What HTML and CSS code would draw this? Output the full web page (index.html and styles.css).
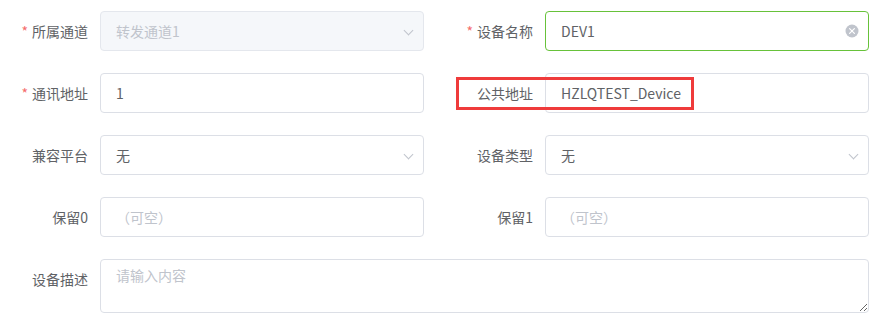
FILE: index.html
```html
<!DOCTYPE html>
<html lang="zh-CN">
<head>
    <meta charset="UTF-8">
    <meta name="viewport" content="width=device-width, initial-scale=1.0">
    <title>设备编辑</title>
    <link rel="stylesheet" href="styles.css">
</head>
<body>
    <form class="device-form">
        <div class="form-item">
            <label class="form-label required">所属通道</label>
            <div class="form-control select disabled">
                <input type="text" value="转发通道1" disabled>
                <span class="arrow"></span>
            </div>
        </div>
        <div class="form-item">
            <label class="form-label required">设备名称</label>
            <div class="form-control focused">
                <input type="text" value="DEV1">
                <span class="clear-icon">
                    <svg viewBox="0 0 14 14" width="14" height="14">
                        <circle cx="7" cy="7" r="6.5" fill="#c0c4cc"/>
                        <path d="M4.6 4.6 L9.4 9.4 M9.4 4.6 L4.6 9.4" stroke="#fff" stroke-width="1.2" stroke-linecap="round"/>
                    </svg>
                </span>
            </div>
        </div>

        <div class="form-item">
            <label class="form-label required">通讯地址</label>
            <div class="form-control">
                <input type="text" value="1">
            </div>
        </div>
        <div class="form-item">
            <label class="form-label">公共地址</label>
            <div class="form-control">
                <input type="text" value="HZLQTEST_Device">
            </div>
            <!-- annotation box from the screenshot -->
            <span class="highlight-box"></span>
        </div>

        <div class="form-item">
            <label class="form-label">兼容平台</label>
            <div class="form-control select">
                <input type="text" value="无" readonly>
                <span class="arrow"></span>
            </div>
        </div>
        <div class="form-item">
            <label class="form-label">设备类型</label>
            <div class="form-control select">
                <input type="text" value="无" readonly>
                <span class="arrow"></span>
            </div>
        </div>

        <div class="form-item">
            <label class="form-label">保留0</label>
            <div class="form-control">
                <input type="text" placeholder="（可空）">
            </div>
        </div>
        <div class="form-item">
            <label class="form-label">保留1</label>
            <div class="form-control">
                <input type="text" placeholder="（可空）">
            </div>
        </div>

        <div class="form-item full">
            <label class="form-label">设备描述</label>
            <div class="form-control">
                <textarea rows="2" placeholder="请输入内容"></textarea>
            </div>
        </div>
    </form>
</body>
</html>
```

FILE: styles.css
```css
* {
    margin: 0;
    padding: 0;
    box-sizing: border-box;
}

body {
    font-family: "Noto Sans CJK SC", "Noto Sans", sans-serif;
    font-size: 14px;
    color: #606266;
    background: #fff;
}

.device-form {
    display: grid;
    grid-template-columns: 424px 424px;
    column-gap: 21px;
    row-gap: 22px;
    padding-top: 11px;
}

.form-item {
    position: relative;
    display: flex;
    align-items: flex-start;
}

.form-item.full {
    grid-column: 1 / 3;
}

.form-label {
    width: 100px;
    flex-shrink: 0;
    padding-right: 12px;
    text-align: right;
    line-height: 40px;
    color: #606266;
}

.form-label.required::before {
    content: "*";
    color: #f56c6c;
    margin-right: 4px;
}

.form-control {
    position: relative;
    flex: 1;
}

.form-control input,
.form-control textarea {
    display: block;
    width: 100%;
    height: 40px;
    padding: 0 15px;
    border: 1px solid #dcdfe6;
    border-radius: 4px;
    background: #fff;
    color: #606266;
    font-family: inherit;
    font-size: 14px;
    outline: none;
}

.form-control textarea {
    height: 54px;
    padding: 5px 15px;
    line-height: 1.5;
    resize: vertical;
}

.form-control input::placeholder,
.form-control textarea::placeholder {
    color: #c0c4cc;
}

.form-control.select input {
    padding-right: 30px;
    cursor: pointer;
}

.form-control.disabled input {
    background: #f5f7fa;
    border-color: #e4e7ed;
    color: #c0c4cc;
}

.form-control.focused input {
    border-color: #67c23a;
    padding-right: 30px;
}

.arrow {
    position: absolute;
    right: 12px;
    top: 16px;
    width: 7px;
    height: 7px;
    border-right: 1px solid #c0c4cc;
    border-bottom: 1px solid #c0c4cc;
    transform: rotate(45deg);
}

.clear-icon {
    position: absolute;
    right: 10px;
    top: 13px;
    width: 14px;
    height: 14px;
    display: flex;
}

.highlight-box {
    position: absolute;
    left: 11px;
    top: 4px;
    width: 238px;
    height: 33px;
    border: 3px solid #ef3b3b;
    pointer-events: none;
}
```
